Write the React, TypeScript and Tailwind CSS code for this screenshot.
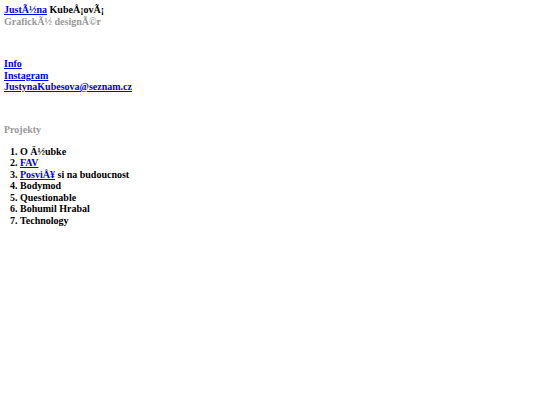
export default function App() {
  const projekty = [
    { name: 'O Ä½ubke' },
    { name: 'FAV', href: '#' },
    { name: 'PosviÅ¥', href: '#', rest: ' si na budoucnost' },
    { name: 'Bodymod' },
    { name: 'Questionable' },
    { name: 'Bohumil Hrabal' },
    { name: 'Technology' },
  ]

  return (
    <div className="min-h-[405px] bg-white pl-[4px] pt-[4px] text-[10px] font-bold leading-[11.5px] text-black [font-family:'Liberation_Serif',serif]">
      <div>
        <a href="#" className="text-[#0000ee] underline">JustÃ½na</a> KubeÅ¡ovÃ¡
      </div>
      <div className="text-[#999999]">GrafickÃ½ designÃ©r</div>

      <div className="mt-[31px] flex flex-col">
        <a href="#" className="w-fit text-[#0000ee] underline">Info</a>
        <a href="#" className="w-fit text-[#0000ee] underline">Instagram</a>
        <a href="#" className="w-fit text-[#0000ee] underline">JustynaKubesova@seznam.cz</a>
      </div>

      <div className="mt-[31px] text-[#999999]">Projekty</div>

      <ol className="mt-[10.5px] list-decimal pl-[16px]">
        {projekty.map((p) => (
          <li key={p.name}>
            {p.href ? (
              <a href={p.href} className="text-[#0000ee] underline">{p.name}</a>
            ) : (
              p.name
            )}
            {p.rest}
          </li>
        ))}
      </ol>
    </div>
  )
}
